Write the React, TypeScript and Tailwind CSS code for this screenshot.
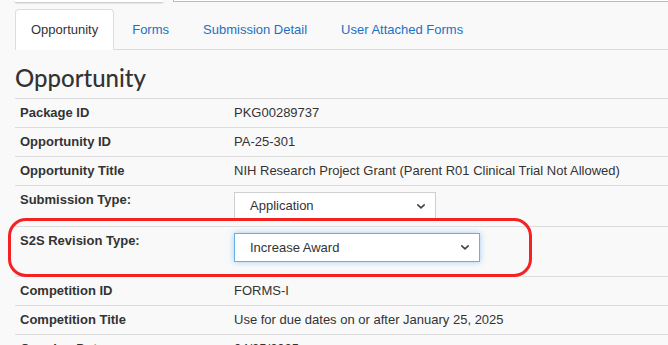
import React from "react";

type Row = {
  label: string;
  value?: string;
  select?: { value: string; width: string; focused?: boolean };
  pad?: string;
};

const rows: Row[] = [
  { label: "Package ID", value: "PKG00289737" },
  { label: "Opportunity ID", value: "PA-25-301" },
  { label: "Opportunity Title", value: "NIH Research Project Grant (Parent R01 Clinical Trial Not Allowed)" },
  { label: "Submission Type:", select: { value: "Application", width: "w-[202px]" } },
  { label: "S2S Revision Type:", select: { value: "Increase Award", width: "w-[246px]", focused: true }, pad: "pb-[14px]" },
  { label: "Competition ID", value: "FORMS-I" },
  { label: "Competition Title", value: "Use for due dates on or after January 25, 2025" },
  { label: "Opening Date", value: "04/25/2025" },
];

function Chevron() {
  return (
    <svg width="10" height="7" viewBox="0 0 10 7" className="shrink-0">
      <path d="M1.8 1.8 L5 4.8 L8.2 1.8" fill="none" stroke="#444" strokeWidth="1.6" strokeLinecap="round" strokeLinejoin="round" />
    </svg>
  );
}

function FakeSelect({ value, width, focused }: { value: string; width: string; focused?: boolean }) {
  return (
    <div
      className={`${width} flex items-center justify-between bg-white pl-[15px] pr-[9px] text-[13px] text-[#333] ${
        focused
          ? "h-[29px] border border-[#66afe9] shadow-[0_0_6px_rgba(102,175,233,0.6)]"
          : "h-[28px] border border-[#cfcfcf]"
      }`}
    >
      <span>{value}</span>
      <Chevron />
    </div>
  );
}

const tabs = ["Opportunity", "Forms", "Submission Detail", "User Attached Forms"];

export default function App() {
  return (
    <div className="h-[345px] w-[668px] overflow-hidden bg-[#f9f9f9] font-['Liberation_Sans',Arial,sans-serif] text-[13px] text-[#333]">
      {/* leftovers of the header above */}
      <div className="flex h-[2px] items-end">
        <div className="ml-[15px] h-[2px] w-[148px] bg-white shadow-[0_1px_2px_rgba(0,0,0,0.25)]" />
        <div className="ml-[10px] h-[2px] flex-1 border-b border-l border-[#bbb] bg-white" />
      </div>

      {/* tabs */}
      <div className="ml-[15px] mt-[7px] flex border-b border-[#dddddd]">
        {tabs.map((t, i) => (
          <div
            key={t}
            className={`-mb-px mr-[2px] flex h-[41px] items-center px-[15px] ${
              i === 0
                ? "rounded-t-[4px] border border-b-0 border-[#dddddd] bg-white text-[#333]"
                : "border border-transparent text-[#1f6fc4]"
            }`}
          >
            {t}
          </div>
        ))}
      </div>

      <h1 className="ml-[15px] mt-[13px] h-[35px] font-['Lato',sans-serif] text-[24px] font-medium leading-[30px] text-[#333]">
        Opportunity
      </h1>

      {/* details table */}
      <div className="relative ml-[15px]">
        <table className="w-full border-collapse">
          <tbody>
            {rows.map((r) => (
              <tr key={r.label} className="border-t border-[#dcdcdc] align-top">
                <td className={`w-[219px] px-[5px] pt-[6px] pb-[6px] font-bold leading-[16px] ${r.pad ?? ""}`}>
                  {r.label}
                </td>
                <td className={`px-0 pt-[6px] pb-[6px] leading-[16px] ${r.pad ?? ""}`}>
                  {r.select ? <FakeSelect {...r.select} /> : r.value}
                </td>
              </tr>
            ))}
          </tbody>
        </table>
        {/* red highlight annotation */}
        <div className="pointer-events-none absolute left-[-7px] top-[120px] h-[59px] w-[524px] rounded-[18px] border-[3px] border-[#f52222]" />
      </div>
    </div>
  );
}
